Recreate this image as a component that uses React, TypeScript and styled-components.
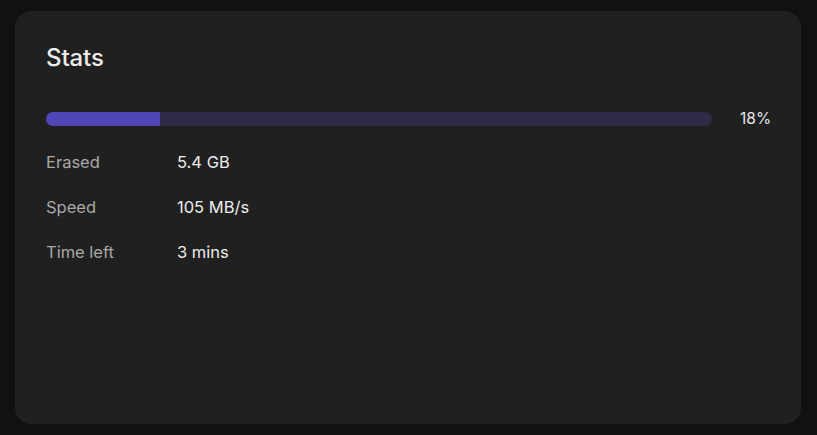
import React from "react";
import styled, { createGlobalStyle } from "styled-components";

const Global = createGlobalStyle`
  html, body { margin: 0; padding: 0; background: #111111; }
  body { font-family: "Inter", "Noto Sans", sans-serif; -webkit-font-smoothing: antialiased; }
`;

const Page = styled.div`
  width: 817px;
  height: 435px;
  box-sizing: border-box;
  padding: 11px 16px 11px 15px;
  display: flex;
`;

const Card = styled.section`
  flex: 1;
  background: #202020;
  border-radius: 16px;
  padding: 32px 31px 0 31px;
  display: flex;
  flex-direction: column;
`;

const Title = styled.h2`
  margin: 0;
  font-size: 24px;
  font-weight: 500;
  color: #ececec;
  line-height: 30px;
  letter-spacing: -0.1px;
`;

const ProgressRow = styled.div`
  margin-top: 36px;
  display: flex;
  align-items: center;
  gap: 28px;
`;

const Track = styled.div`
  flex: 1;
  height: 14px;
  border-radius: 7px;
  background: #2e2a48;
  overflow: hidden;
`;

const Fill = styled.div`
  height: 100%;
  background: #5046b5;
`;

const Percent = styled.span`
  font-size: 15.5px;
  color: #e6e6e6;
  width: 30px;
  text-align: right;
`;

const Rows = styled.div`
  margin-top: 24px;
  display: grid;
  grid-template-columns: 131px 1fr;
  row-gap: 25px;
`;

const Label = styled.span`
  font-size: 16.5px;
  line-height: 20px;
  color: #a8a8a8;
`;

const Value = styled.span`
  font-size: 16.5px;
  line-height: 20px;
  color: #ececec;
`;

const stats = [
  ["Erased", "5.4 GB"],
  ["Speed", "105 MB/s"],
  ["Time left", "3 mins"],
];

export default function App() {
  return (
    <>
      <Global />
      <Page>
        <Card>
          <Title>Stats</Title>
          <ProgressRow>
            <Track>
              <Fill style={{ width: "17.1%" }} />
            </Track>
            <Percent>18%</Percent>
          </ProgressRow>
          <Rows>
            {stats.map(([l, v]) => (
              <React.Fragment key={l}>
                <Label>{l}</Label>
                <Value>{v}</Value>
              </React.Fragment>
            ))}
          </Rows>
        </Card>
      </Page>
    </>
  );
}
